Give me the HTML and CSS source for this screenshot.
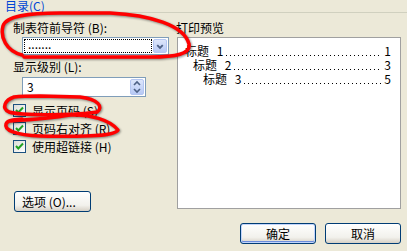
FILE: index.html
```html
<!DOCTYPE html>
<html lang="zh-CN">
<head>
<meta charset="utf-8">
<title>目录</title>
<link rel="stylesheet" href="styles.css">
</head>
<body>
<div class="dialog">
  <div class="group-head">
    <span class="group-title">目录(C)</span>
    <span class="group-line"></span>
  </div>
  <div class="main">
    <div class="left">
      <div class="label">制表符前导符 (B):</div>
      <div class="combo">
        <div class="combo-field"><span class="combo-text">.......</span></div>
        <div class="combo-btn">
          <svg width="13" height="13" viewBox="0 0 13 13"><path d="M3.5 5 L6.5 8 L9.5 5" fill="none" stroke="#4D6185" stroke-width="2"/></svg>
        </div>
      </div>
      <div class="label label-level">显示级别 (L):</div>
      <div class="spinner">
        <span class="spin-text">3</span>
        <div class="spin-btn">
          <svg width="12" height="16" viewBox="0 0 12 16"><path d="M3 6 L6 3 L9 6" fill="none" stroke="#4D6185" stroke-width="1.6"/><path d="M3 10 L6 13 L9 10" fill="none" stroke="#4D6185" stroke-width="1.6"/></svg>
        </div>
      </div>
      <div class="checks">
        <label class="check"><span class="box"><svg width="11" height="11" viewBox="0 0 11 11"><path d="M2 5 L4.3 7.5 L9 2.5" fill="none" stroke="#21A121" stroke-width="2"/></svg></span>显示页码 (S)</label>
        <label class="check"><span class="box"><svg width="11" height="11" viewBox="0 0 11 11"><path d="M2 5 L4.3 7.5 L9 2.5" fill="none" stroke="#21A121" stroke-width="2"/></svg></span>页码右对齐 (R)</label>
        <label class="check"><span class="box"><svg width="11" height="11" viewBox="0 0 11 11"><path d="M2 5 L4.3 7.5 L9 2.5" fill="none" stroke="#21A121" stroke-width="2"/></svg></span>使用超链接 (H)</label>
      </div>
      <button class="btn btn-options">选项 (O)...</button>
    </div>
    <div class="right">
      <div class="label">打印预览</div>
      <div class="preview">
        <div class="toc toc1"><span class="toc-name">标题 1</span><span class="leader"></span><span class="toc-page">1</span></div>
        <div class="toc toc2"><span class="toc-name">标题 2</span><span class="leader"></span><span class="toc-page">3</span></div>
        <div class="toc toc3"><span class="toc-name">标题 3</span><span class="leader"></span><span class="toc-page">5</span></div>
      </div>
    </div>
  </div>
  <div class="actions">
    <button class="btn btn-default">确定</button>
    <button class="btn">取消</button>
  </div>
  <svg class="marks" width="407" height="251" viewBox="0 0 407 251">
    <path d="M22 55 C6 51, 0 37, 3 26 C6 16, 28 13, 60 13 L110 13 C150 15, 184 25, 189 44 C191 54, 176 57, 150 57 L24 57" />
    <path d="M14 97 C5 100, 1 108, 9 112 C22 116, 80 115, 97 112 C104 107, 98 99, 80 97 L40 96 C30 96, 22 96, 14 97" />
    <path d="M10 121 C40 119, 58 117, 70 115 C90 114, 110 120, 118 130 C115 136, 90 137, 40 136 C15 135, 4 130, 6 124 C7 121, 10 120, 22 119" />
  </svg>
</div>
</body>
</html>
```

FILE: styles.css
```css
html, body {
  margin: 0;
  padding: 0;
}
body {
  width: 407px;
  height: 251px;
  overflow: hidden;
  background: #ECE9D8;
  font-family: "Noto Sans CJK SC", "Liberation Sans", sans-serif;
  font-size: 12px;
  color: #000;
}
.dialog {
  position: relative;
  width: 407px;
  height: 251px;
  overflow: hidden;
}
.group-head {
  display: flex;
  align-items: flex-end;
  height: 13px;
  padding-left: 5px;
}
.group-title {
  color: #0046D5;
  line-height: 14px;
}
.group-line {
  flex: 1;
  margin-left: 3px;
  height: 0;
  border-top: 1px solid #D0D0BF;
}
.main {
  display: flex;
  padding-left: 13px;
  padding-top: 7px;
}
.left {
  width: 163px;
  display: flex;
  flex-direction: column;
  align-items: flex-start;
}
.label {
  line-height: 16px;
  height: 16px;
  white-space: nowrap;
}
.combo {
  margin-top: 1px;
  margin-left: 9px;
  width: 147px;
  height: 18px;
  box-sizing: border-box;
  border: 1px solid #7F9DB9;
  background: #fff;
  display: flex;
  padding: 1px;
}
.combo-field {
  flex: 1;
  border: 1px dotted #000;
  background: #fff;
  margin-right: 1px;
  display: flex;
  align-items: center;
}
.combo-text {
  padding-left: 3px;
  line-height: 12px;
  position: relative;
  top: -2px;
}
.combo-btn {
  width: 14px;
  background: linear-gradient(#DDE6FB, #B7C9F5);
  border: 1px solid #B4C6F2;
  box-sizing: border-box;
  border-radius: 2px;
  display: flex;
  align-items: center;
  justify-content: center;
}
.label-level {
  margin-top: 4px;
}
.spinner {
  margin-top: 2px;
  margin-left: 9px;
  width: 124px;
  height: 20px;
  box-sizing: border-box;
  border: 1px solid #7F9DB9;
  background: #fff;
  display: flex;
  align-items: center;
  padding: 1px;
}
.spin-text {
  flex: 1;
  padding-left: 3px;
  line-height: 16px;
}
.spin-btn {
  width: 14px;
  height: 16px;
  background: linear-gradient(#DDE6FB, #B7C9F5);
  border: 1px solid #B4C6F2;
  box-sizing: border-box;
  border-radius: 2px;
  display: flex;
  align-items: center;
  justify-content: center;
}
.checks {
  margin-top: 7px;
  display: flex;
  flex-direction: column;
  gap: 5px;
}
.check {
  display: flex;
  align-items: center;
  height: 13px;
  line-height: 13px;
  white-space: nowrap;
}
.box {
  width: 13px;
  height: 13px;
  box-sizing: border-box;
  border: 1px solid #1C5180;
  background: linear-gradient(135deg, #DCDCD7, #fff);
  display: flex;
  align-items: center;
  justify-content: center;
  margin-right: 6px;
}
.btn {
  font-family: "Noto Sans CJK SC", "Liberation Sans", sans-serif;
  font-size: 12px;
  color: #000;
  height: 21px;
  width: 76px;
  padding: 0;
  box-sizing: border-box;
  border: 1px solid #003C74;
  border-radius: 3px;
  background: linear-gradient(#FFFFFF, #F2F1EC 70%, #D6D0C5);
  line-height: 18px;
  white-space: nowrap;
}
.btn-options {
  margin-top: 38px;
  margin-left: 1px;
  width: 77px;
  text-align: left;
  padding-left: 7px;
}
.btn-default {
  box-shadow: inset 0 0 0 1px #C2D5FC, inset 0 -1px 0 1px #6B8CDB;
}
.right {
  width: 225px;
  display: flex;
  flex-direction: column;
}
.preview {
  margin-top: 1px;
  margin-left: 1px;
  width: 224px;
  height: 172px;
  box-sizing: border-box;
  border: 1px solid #A0A0A0;
  background: #fff;
  padding: 6px 9px 0 7px;
  display: flex;
  flex-direction: column;
}
.toc {
  display: flex;
  align-items: baseline;
  height: 14px;
  line-height: 14px;
  white-space: pre;
}
.toc2 { padding-left: 8px; }
.toc3 { padding-left: 18px; }
.toc-name { word-spacing: 5px; }
.leader {
  flex: 1;
  height: 1px;
  margin: 0 2px 0 3px;
  background-image: repeating-linear-gradient(to right, #000 0 1px, transparent 1px 4px);
}
.actions {
  position: absolute;
  left: 0;
  right: 6px;
  top: 223px;
  display: flex;
  justify-content: flex-end;
  gap: 9px;
}
.marks {
  position: absolute;
  left: 0;
  top: 0;
  pointer-events: none;
  filter: drop-shadow(1px 1px 1px rgba(0, 0, 0, 0.45));
}
.marks path {
  fill: none;
  stroke: #FF0000;
  stroke-width: 3.5;
  stroke-linecap: round;
  stroke-linejoin: round;
}
```
